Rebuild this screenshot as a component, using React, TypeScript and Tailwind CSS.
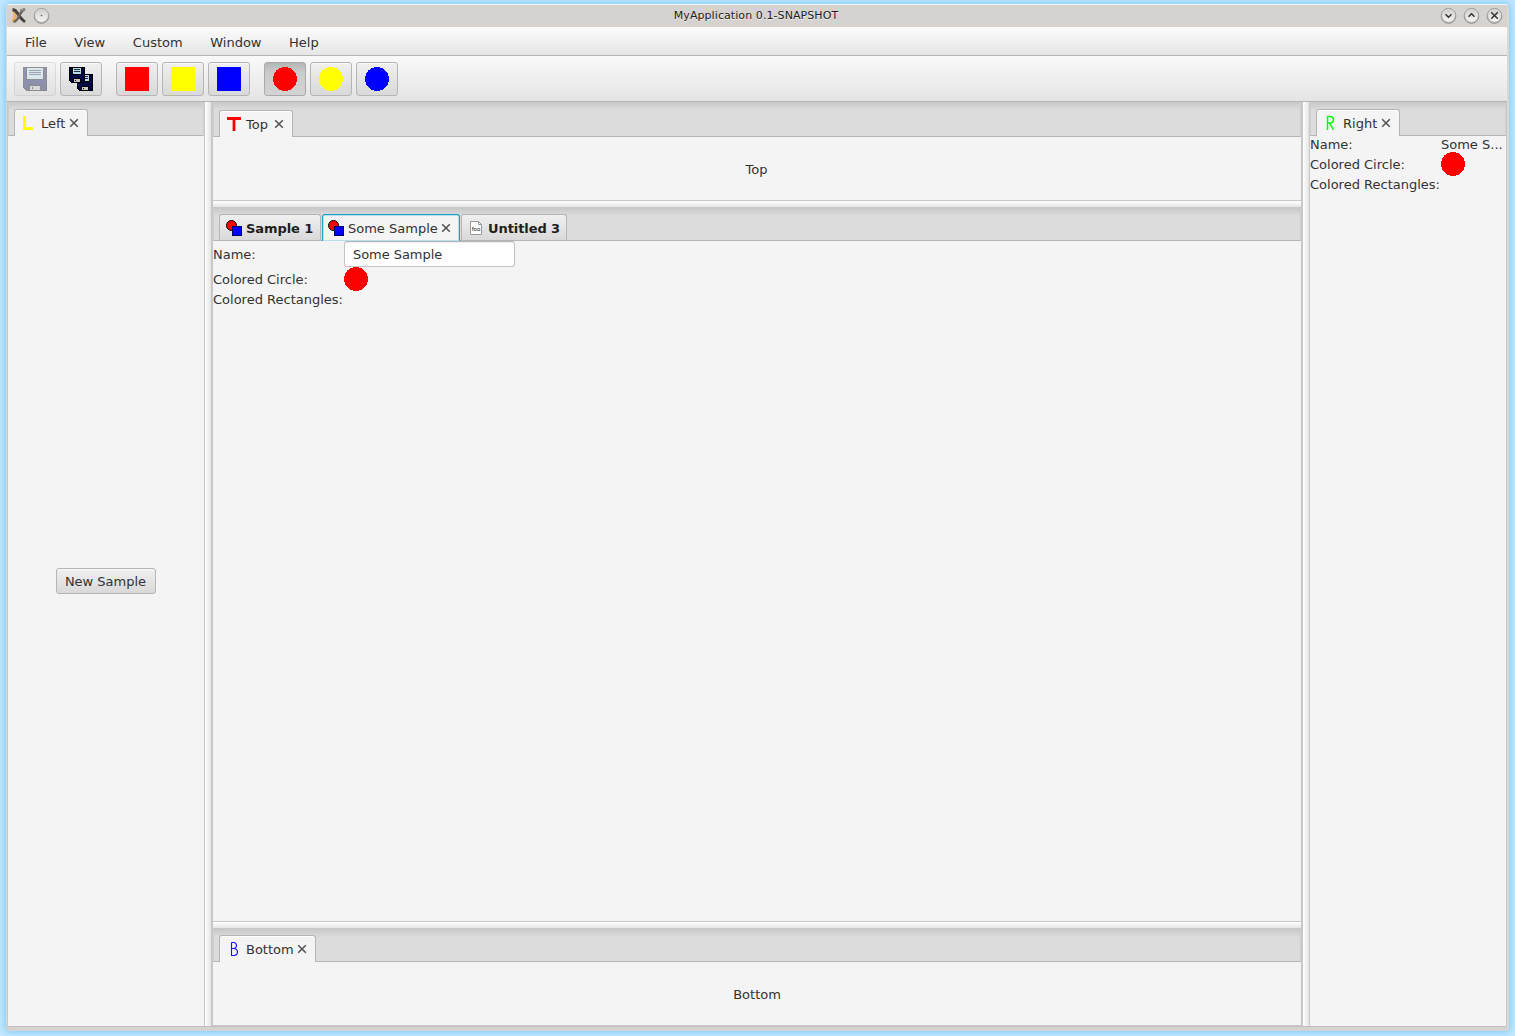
import React from 'react';

function Close() {
  return (
    <svg className="shrink-0" width="10" height="10" viewBox="0 0 10 10" fill="none" stroke="#555" strokeWidth="1.6">
      <path d="M1.2 1.2L8.8 8.8M8.8 1.2L1.2 8.8" />
    </svg>
  );
}

function Disk() {
  return (
    <svg width="24" height="24" viewBox="0 0 24 24" shapeRendering="crispEdges">
      <path d="M0 0H24V24H3V23H2V22H1V21H0Z" fill="#000" />
      <path d="M1 1H23V23H3V22H2V21H1Z" fill="#000850" />
      <rect x="3" y="0" width="18" height="13" fill="#000" />
      <rect x="4" y="1" width="16" height="11" fill="#b8dcea" />
      <path d="M6 3.5H18M6 5.5H18M6 7.5H18" stroke="#203050" strokeWidth="1" />
      <rect x="6" y="18" width="12" height="6" fill="#000" />
      <rect x="7" y="19" width="10" height="4" fill="#c0c0c0" />
      <rect x="9" y="20" width="1" height="2" fill="#000" />
    </svg>
  );
}

function Disks() {
  return (
    <svg width="24" height="24" viewBox="0 0 24 24" shapeRendering="crispEdges">
      <path d="M0 0H16V16H2V15H1V14H0Z" fill="#000" />
      <path d="M1 1H15V15H2V14H1Z" fill="#000848" />
      <rect x="3" y="0" width="10" height="8" fill="#000" />
      <rect x="4" y="1" width="8" height="6" fill="#b8dcea" />
      <path d="M5 2.5H11M5 4.5H11" stroke="#203040" />
      <rect x="4" y="11" width="8" height="5" fill="#000" />
      <rect x="5" y="12" width="6" height="3" fill="#c8c8c0" />
      <rect x="6" y="13" width="1" height="1" fill="#000" />
      <path d="M15 7H24V24H10V23H9V22H8V16H15Z" fill="#000" />
      <path d="M16 8H23V23H10V22H9V16H16Z" fill="#000848" />
      <path d="M15 7H21V15H15Z" fill="#000" />
      <rect x="16" y="8" width="4" height="6" fill="#b8dcea" />
      <path d="M16 9.5H19M16 11.5H19" stroke="#203040" />
      <rect x="12" y="19" width="8" height="5" fill="#000" />
      <rect x="13" y="20" width="6" height="3" fill="#c8c8c0" />
      <rect x="14" y="21" width="1" height="1" fill="#000" />
    </svg>
  );
}

function Shape({ round, color }: { round?: boolean; color: string }) {
  return (
    <svg className="shrink-0" width="24" height="24" viewBox="0 0 24 24" shapeRendering="crispEdges">
      {round ? <circle cx="12" cy="12" r="12" fill={color} /> : <rect width="24" height="24" fill={color} />}
    </svg>
  );
}

function ToolButton({ pressed, disabled, gap, children }: { pressed?: boolean; disabled?: boolean; gap?: boolean; children: React.ReactNode }) {
  return (
    <button
      className={
        'flex h-[34px] w-[42px] shrink-0 items-center justify-center rounded-[3px] border ' +
        (pressed
          ? 'border-[#a9a9a9] bg-gradient-to-b from-[#b5b5b5] via-[#cbcbcb] via-30% to-[#d3d3d3] '
          : 'border-[#b5b5b5] bg-gradient-to-b from-[#f0f0f0] to-[#d9d9d9] shadow-[inset_0_1px_0_#f8f8f8] ') +
        (disabled ? 'opacity-40 ' : '') +
        (gap ? 'ml-[14px]' : 'ml-1')
      }
    >
      {children}
    </button>
  );
}

function CircleSquare() {
  return (
    <svg className="shrink-0" width="16" height="16" viewBox="0 0 16 16">
      <circle cx="5.5" cy="5.5" r="5" fill="#f00" stroke="#000" />
      <rect x="6.5" y="6.5" width="9" height="9" fill="#00f" stroke="#000060" />
    </svg>
  );
}

function Foo() {
  return (
    <svg className="shrink-0" width="16" height="16" viewBox="0 0 16 16">
      <path d="M2.5 1.5H10.5L13.5 4.5V14.5H2.5Z" fill="#fff" stroke="#999" />
      <path d="M10.5 1.5V4.5H13.5" fill="none" stroke="#999" />
      <text x="8" y="11" textAnchor="middle" fontSize="5.5" fontWeight="400" fill="#222" fontFamily="DejaVu Sans">foo</text>
    </svg>
  );
}

function Header({ children, className }: { children: React.ReactNode; className: string }) {
  return (
    <div className={'flex shrink-0 items-end border-x border-b border-x-[#cfcfcf] border-b-[#b5b5b5] bg-gradient-to-b from-[#c8c8c8] via-[#dcdcdc] via-[8px] to-[#dcdcdc] pl-[5px] ' + className}>
      {children}
    </div>
  );
}

function Tab({ icon, label, width, closeGap = 'mr-[4px]' }: { icon: React.ReactNode; label: string; width: string; closeGap?: string }) {
  return (
    <div className={'relative -mb-px flex h-[27px] items-center rounded-t-[3px] border border-b-0 border-[#b5b5b5] bg-[#f4f4f4] pl-[6px] shadow-[inset_0_1px_0_#fff] ' + width}>
      {icon}
      <span className={'ml-[4px] pt-[2px] ' + closeGap}>{label}</span>
      <Close />
    </div>
  );
}

function Letter({ d, color, w }: { d: string; color: string; w: number }) {
  return (
    <svg className="shrink-0" width="16" height="16" viewBox="0 0 16 16" fill="none" stroke={color} strokeWidth={w}>
      <path d={d} />
    </svg>
  );
}

function Orb({ d, dot }: { d?: string; dot?: boolean }) {
  return (
    <svg className="block" width="17" height="17" viewBox="0 0 17 17" fill="none">
      <defs>
        <linearGradient id="orb" x1="0" y1="0" x2="0" y2="1">
          <stop offset="0" stopColor="#cfccc9" />
          <stop offset="1" stopColor="#f8f7f6" />
        </linearGradient>
      </defs>
      <circle cx="8.5" cy="9" r="7.3" stroke="#6f6b68" strokeOpacity=".7" />
      <circle cx="8.5" cy="8.3" r="7" fill="url(#orb)" stroke="#9f9b98" strokeWidth=".7" />
      {d && <path d={d} stroke="#333" strokeWidth="1.5" />}
      {dot && <circle cx="8.5" cy="8.5" r=".8" fill="#555" />}
    </svg>
  );
}

function AppIcon() {
  return (
    <svg width="16" height="16" viewBox="0 0 16 16" fill="none">
      <path d="M2.5 3Q5 7 4 9L2 13.5" stroke="#f9a03a" strokeWidth="3" opacity=".75" />
      <path d="M1.5 1.5Q5 2 7 6T14 14" stroke="#44433e" strokeWidth="2.8" />
      <path d="M14 1Q10 3 8 8T2.5 14" stroke="#6a665c" strokeWidth="2.4" />
      <path d="M9 2.5L14 1" stroke="#8a8a86" strokeWidth="2" />
    </svg>
  );
}

function HDivider() {
  return <div className="h-[8px] shrink-0 border-b border-t border-b-[#c8c8c8] border-t-[#c8c8c8] bg-gradient-to-b from-white to-[#e6e6e6]" />;
}

export default function App() {
  return (
    <div className="h-[1036px] w-[1515px] overflow-hidden bg-[#c2e6fd] pl-[6px] pr-[6px] pt-[4px] font-['DejaVu_Sans',sans-serif] text-[13px] leading-[20px] text-[#323232]">
      <div className="relative flex h-[1027px] flex-col overflow-hidden rounded-[4px] border-l border-r-2 border-t border-x-[#dcd8d5] border-t-[#f7f6f5] bg-[#d6d2cf] shadow-[0_0_6px_1px_#7acbf8]">
        <div className="flex h-[22px] shrink-0 items-center pl-1 pr-[4px]">
          <AppIcon />
          <span className="-mt-[2px] ml-[6px]"><Orb dot /></span>
          <span className="flex-1 text-center text-[11px] tracking-[0.08px] text-[#1c1c1c] [text-shadow:0_1px_0_#f0eeec]">
            <span className="pl-[22px]">MyApplication 0.1-SNAPSHOT</span>
          </span>
          <span className="-mt-[2px] flex gap-[6px]">
            <Orb d="M5.5 7.2L8.5 10.2L11.5 7.2" />
            <Orb d="M5.5 9.8L8.5 6.8L11.5 9.8" />
            <Orb d="M5.2 5.2L11.8 11.8M11.8 5.2L5.2 11.8" />
          </span>
        </div>
        <nav className="flex h-[29px] shrink-0 items-center gap-[27.6px] border-b border-[#b5b5b5] bg-gradient-to-b from-[#fcfcfc] to-[#e6e6e6] pl-[18px] pt-[4px]">
          <span>File</span><span>View</span><span>Custom</span><span>Window</span><span>Help</span>
        </nav>
        <div className="flex h-[46px] shrink-0 items-center border-b border-[#b5b5b5] bg-gradient-to-b from-[#fafafa] to-[#e4e4e4] pl-[3px]">
          <ToolButton disabled><Disk /></ToolButton>
          <ToolButton><Disks /></ToolButton>
          <ToolButton gap><Shape color="#f00" /></ToolButton>
          <ToolButton><Shape color="#ff0" /></ToolButton>
          <ToolButton><Shape color="#00f" /></ToolButton>
          <ToolButton gap pressed><Shape round color="#f00" /></ToolButton>
          <ToolButton><Shape round color="#ff0" /></ToolButton>
          <ToolButton><Shape round color="#00f" /></ToolButton>
        </div>
        <main className="flex h-[925px] shrink-0 border-b border-[#c0c0c0] bg-[#f4f4f4]">
          <section className="flex w-[198px] shrink-0 flex-col border-x border-[#c8c8c8]">
            <Header className="h-[34px]">
              <Tab width="w-[74px]" label="Left" icon={<Letter d="M3.5 1V13.5H12" color="#ff0" w={3} />} />
            </Header>
            <div className="flex flex-1 items-center justify-center pb-px">
              <button className="h-[26px] w-[100px] rounded-[3px] border border-[#b5b5b5] bg-gradient-to-b from-[#f0f0f0] to-[#d9d9d9] pr-px pt-[2px] shadow-[inset_0_1px_0_#f8f8f8]">New Sample</button>
            </div>
          </section>
          <div className="w-[6px] shrink-0 bg-gradient-to-r from-white to-[#e4e4e4]" />
          <section className="flex w-[1092px] shrink-0 flex-col border-x-2 border-b border-[#c8c8c8]">
            <Header className="h-[35px]">
              <Tab width="w-[74px]" label="Top" closeGap="mr-[6px]" icon={<Letter d="M1 2.5H15M8 2.5V15" color="#f00" w={2.8} />} />
            </Header>
            <div className="flex h-[63px] shrink-0 items-center justify-center pr-px pt-[3px]">Top</div>
            <HDivider />
            <Header className="h-[33px]">
              <div className="flex h-[26px] w-[102px] items-center rounded-t-[3px] border border-b-0 border-[#b5b5b5] bg-gradient-to-b from-[#f0f0f0] to-[#d9d9d9] pl-[6px] font-bold text-[#1e1e1e]">
                <CircleSquare /><span className="ml-1 whitespace-nowrap pt-[2px] tracking-[-0.08px]">Sample 1</span>
              </div>
              <div className="relative -mb-px ml-px flex h-[27px] w-[138px] items-center rounded-t-[3px] border border-b-0 border-[#1f9cc6] bg-[#f4f4f4] pl-[5px] shadow-[inset_0_0_0_1px_#b9dfec]">
                <CircleSquare /><span className="ml-1 mr-[3px] whitespace-nowrap pt-[2px]">Some Sample</span><Close />
              </div>
              <div className="ml-px flex h-[26px] w-[106px] items-center rounded-t-[3px] border border-b-0 border-[#b5b5b5] bg-gradient-to-b from-[#f0f0f0] to-[#d9d9d9] pl-[6px] font-bold text-[#1e1e1e]">
                <Foo /><span className="ml-1 whitespace-nowrap pt-[2px] tracking-[-0.08px]">Untitled 3</span>
              </div>
            </Header>
            <div className="grid h-[680px] shrink-0 grid-cols-[131px_171px] grid-rows-[26px_24px_20px] content-start items-center whitespace-nowrap">
              <span className="pt-[2px]">Name:</span>
              <input readOnly value="Some Sample" className="h-[26px] w-[171px] rounded-[3px] border border-[#c4c4c4] border-t-[#b5b5b5] bg-white px-2 tracking-[-0.05px] shadow-[inset_0_1px_1px_#eee]" />
              <span className="pt-[2px]">Colored Circle:</span><Shape round color="#f00" />
              <span className="-mt-[2px]">Colored Rectangles:</span>
            </div>
            <HDivider />
            <Header className="h-[33px]">
              <Tab width="w-[97px]" label="Bottom" closeGap="mr-[3px]" icon={<Letter d="M5.5 1.5H8Q10.5 2 10.5 4.5T8 7.5H5.5M8 7.5Q11.5 8 11.5 11T8.5 14.5H5.5V1.5" color="#11f" w={1.1} />} />
            </Header>
            <div className="flex flex-1 items-center justify-center pt-[2px]">Bottom</div>
          </section>
          <div className="w-[6px] shrink-0 bg-gradient-to-r from-white to-[#e4e4e4]" />
          <section className="flex w-[198px] shrink-0 flex-col border-x border-[#c8c8c8]">
            <Header className="h-[34px]">
              <Tab width="w-[84px]" label="Right" icon={<Letter d="M4.5 15V1.5H7.5Q10.5 2 10.5 4.8T7.5 8H5M6.5 8L10.5 14.8" color="#0f0" w={1.4} />} />
            </Header>
            <div className="grid grid-cols-[131px_1fr] grid-rows-[18px_20px_20px] content-start items-center whitespace-nowrap">
              <span>Name:</span><span>Some S...</span>
              <span className="pt-[2px]">Colored Circle:</span><span className="flex items-center"><Shape round color="#f00" /></span>
              <span className="pt-[2px]">Colored Rectangles:</span>
            </div>
          </section>
        </main>
        <div className="absolute -right-[2px] top-[509px] flex flex-col gap-[2px]">
          <i className="size-px bg-[#777]" /><i className="size-px bg-[#777]" /><i className="size-px bg-[#777]" />
        </div>
      </div>
    </div>
  );
}
